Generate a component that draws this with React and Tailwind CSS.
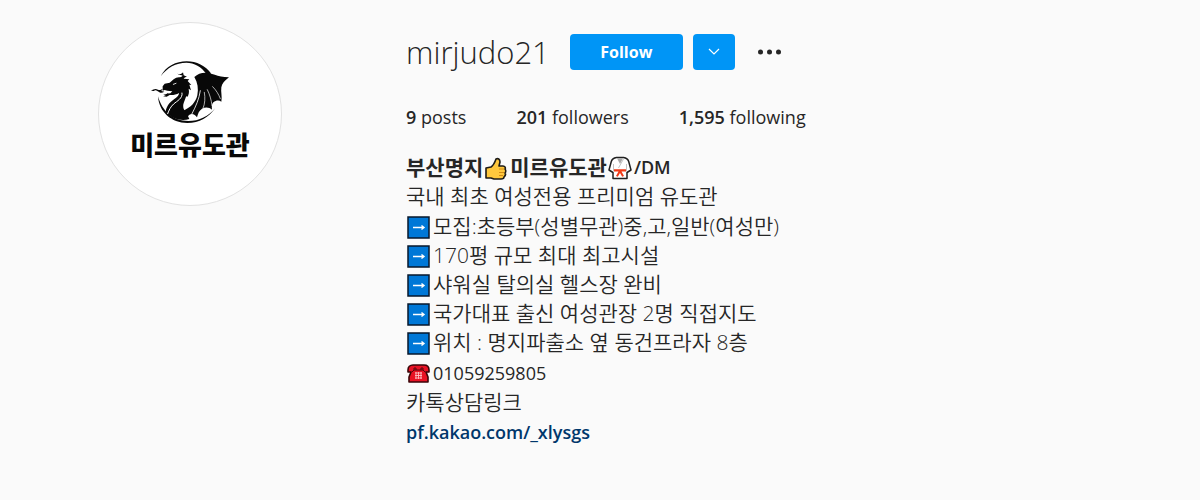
import React from "react";

function DragonLogo() {
  return (
    <svg viewBox="0 0 300 240" className="h-20 w-[100px]" aria-hidden="true">
      <g fill="#080808">
        <path d="M62 79C78 48 108 34 140 34c30 0 56 13 74 37l-14 2C184 50 163 38 139 38 108 38 81 53 62 79z" />
        <path d="M54 139c3 47 40 80 88 80 36 0 65-17 84-45-20 25-48 39-81 39-45 0-79-29-91-74z" />
        <path d="M163 81c9-9 20-13 33-13 17 0 35 12 71 14-13 10-21 19-23 30-2 14 3 27 0 43-7-5-16-4-24 2-5 5-5 13-4 22-8-8-20-9-30-3-9 6-12 14-15 26-4-6-9-10-16-10-8 1-12 7-14 14-5-7-11-16-12-24 22-8 38-24 43-46 4-20 1-39-9-55z" />
        <path d="M68 109l6-8 15-3 12-10c5-4 10-6 16-6 4 0 8-1 11-5-4-3-11-2-16-6 8 3 14 1 17-4l2 9 10 4c-5 1-8 3-10 6l17 2-5 5 11 12-6-1 5 17-7-5c2 10 1 18-5 26l-2-5c-3 10-7 17-9 26-2 13 4 20 11 29l7 15c-25 8-52-1-71-21 2-17 12-29 25-38 9-7 15-12 15-19-8 5-19 7-28 6l-9 5-11-1c5-1 9-4 12-8l10-1 6-6-15-2-8-2-6 2z" />
        <path d="M33 121c8-3 13-7 21-2 5 3 9 0 14-2l-4 6 9 2c-5 3-9 5-15 2-6-4-10-8-15-5-4 2-7 0-10-1z" />
        <path d="M70 134c5 0 9-2 14-4l3 4c-6 3-12 3-17 0z" />
      </g>
      <g fill="none" stroke="#fff" strokeLinecap="round">
        <path d="M181 122c-4 26-13 46-25 69" strokeWidth="2.5" />
        <path d="M193 127c3 17 2 34-4 48" strokeWidth="2" />
        <path d="M202 119c7 14 12 30 14 48" strokeWidth="2" />
        <path d="M218 110c11 11 18 23 23 36" strokeWidth="2" />
        <path d="M126 129c3 16-15 24-25 33-9 8-14 18-18 29" strokeWidth="3" />
        <path d="M100 103l8-3" strokeWidth="2.5" />
      </g>
    </svg>
  );
}

const emojiBox = "inline-block h-6 w-[27px] shrink-0";

function ThumbsUp() {
  return (
    <svg viewBox="0 0 27 24" className={emojiBox} role="img" aria-label="thumbs up">
      <path d="M3 12l5-1c3-2 4-5 5-8 2-1 4 0 4 3l-1 4h4c2 0 3 2 2 3 1 1 1 3 0 4 1 1 0 3-1 4 0 1-1 2-3 2h-7l-3-1H3z" fill="#ffc83d" stroke="#1c1a16" strokeWidth="1.6" strokeLinejoin="round" />
      <path d="M16 13h5M16 16.500h5M16 19.500h4" stroke="#d28b16" strokeWidth="1.200" />
    </svg>
  );
}

function JudoUniform() {
  return (
    <svg viewBox="0 0 27 24" className={emojiBox} role="img" aria-label="martial arts uniform">
      <path d="M9.500 1.500h7c3 .5 4.500 1.500 5.200 4l2.300 8.500-4 2.500v6H6v-6L2 14l2.300-8.500c.7-2.500 2.200-3.500 5.200-4z" fill="#fff" stroke="#202020" strokeWidth="1.500" strokeLinejoin="round" />
      <path d="M10 2.300h6L13 8z" fill="#a9a9a9" />
      <path d="M16.500 3l-5 9M6.500 8v7M19.500 8v7" stroke="#bdbdbd" fill="none" strokeWidth=".9" />
      <path d="M7 13.300h12v2.200h-4.500l2.500 4.500-1.800.8-2.200-3.800-2.200 3.800L9 20l2.500-4.500H7z" fill="#f03a17" />
    </svg>
  );
}

function ArrowBox() {
  return (
    <svg viewBox="0 0 27 24" className={emojiBox} role="img" aria-label="right arrow">
      <rect x="2" y="2" width="21" height="21" fill="#0078d7" stroke="#07172b" strokeWidth="1.500" />
      <path d="M7 12.500h11M15.500 10.500l2.500 2-2.500 2" fill="none" stroke="#fff" strokeWidth="1.400" />
    </svg>
  );
}

function Telephone() {
  return (
    <svg viewBox="0 0 27 24" className={emojiBox} role="img" aria-label="telephone">
      <path d="M2 9c0-3 2-5 5-5h11c3 0 5 2 5 5v2h-3l2 5v5H3v-5l2-5H2z" fill="#e81224" stroke="#3b0508" strokeWidth="1.600" strokeLinejoin="round" />
      <path d="M8 9V7h2v2M15 9V7h2v2M6 11l2-2h9l2 2" fill="none" stroke="#56070d" />
      <path d="M9 12h7M9 14.500h7M9 17h7M10 11v7M12.500 11v7M15 11v7" stroke="#ffc0c4" strokeWidth=".9" />
    </svg>
  );
}

const stats = [
  { value: "9", label: "posts" },
  { value: "201", label: "followers" },
  { value: "1,595", label: "following" },
];

const details = [
  "모집:초등부(성별무관)중,고,일반(여성만)",
  "170평 규모 최대 최고시설",
  "샤워실 탈의실 헬스장 완비",
  "국가대표 출신 여성관장 2명 직접지도",
  "위치 : 명지파출소 옆 동건프라자 8층",
];

export default function App() {
  return (
    <main className="min-h-screen bg-[#fafafa] font-['Open_Sans','Noto_Sans_CJK_KR',sans-serif] text-[#262626]">
      <header className="grid grid-cols-[380fr_794fr] gap-[26px] pt-[22px]">
        <div className="flex justify-center">
          <div className="flex size-[184px] shrink-0 flex-col items-center rounded-full border border-[#e2e2e2] bg-white pt-[27px]">
            <DragonLogo />
            <span className="font-['Noto_Sans_CJK_KR',sans-serif] text-[26px] leading-7 font-black whitespace-nowrap text-[#080808]">
              미르유도관
            </span>
          </div>
        </div>

        <section className="min-w-0 pt-[10px]">
          <div className="flex items-center">
            <h1 className="text-[31px] leading-10 font-light">mirjudo21</h1>
            <button className="ml-5 h-9 w-[113px] rounded bg-[#0095f6] text-[16px] leading-6 font-bold text-white">
              Follow
            </button>
            <button aria-label="Similar accounts" className="ml-[10px] flex h-9 w-[42px] items-center justify-center rounded bg-[#0095f6]">
              <svg viewBox="0 0 12 8" className="h-2 w-3" fill="none" stroke="#fff" strokeWidth="1.2">
                <path d="M1 1l5 5 5-5" />
              </svg>
            </button>
            <button aria-label="Options" className="ml-[22px] flex h-9 w-7 items-center">
              <svg viewBox="0 0 26 6" className="h-[6px] w-[26px]" fill="#262626">
                <circle cx="3.500" cy="3" r="2.500" />
                <circle cx="12.500" cy="3" r="2.500" />
                <circle cx="21.500" cy="3" r="2.500" />
              </svg>
            </button>
          </div>

          <ul className="mt-[31px] flex gap-[50px] text-[18px] leading-7">
            {stats.map((s) => (
              <li key={s.label}>
                <span className="font-semibold">{s.value}</span> {s.label}
              </li>
            ))}
          </ul>

          <div className="mt-[22px] text-[21px] leading-[29px] font-[350] whitespace-nowrap">
            <div className="flex h-[29px] items-center">
              <strong className="font-bold">부산명지</strong>
              <ThumbsUp />
              <strong className="font-bold">미르유도관</strong>
              <JudoUniform />
              <span className="text-[18px] font-semibold">/DM</span>
            </div>
            <p>국내 최초 여성전용 프리미엄 유도관</p>
            <ul className="py-px">
              {details.map((d) => (
                <li key={d} className="flex items-center">
                  <ArrowBox />
                  <span>{d}</span>
                </li>
              ))}
            </ul>
            <div className="flex h-[30px] items-center">
              <Telephone />
              <span className="text-[18px] font-normal">01059259805</span>
            </div>
            <p>카톡상담링크</p>
            <a href="https://pf.kakao.com/_xlysgs" className="block text-[18px] leading-[30px] font-semibold text-[#00376b]">
              pf.kakao.com/_xlysgs
            </a>
          </div>
        </section>
      </header>
    </main>
  );
}
